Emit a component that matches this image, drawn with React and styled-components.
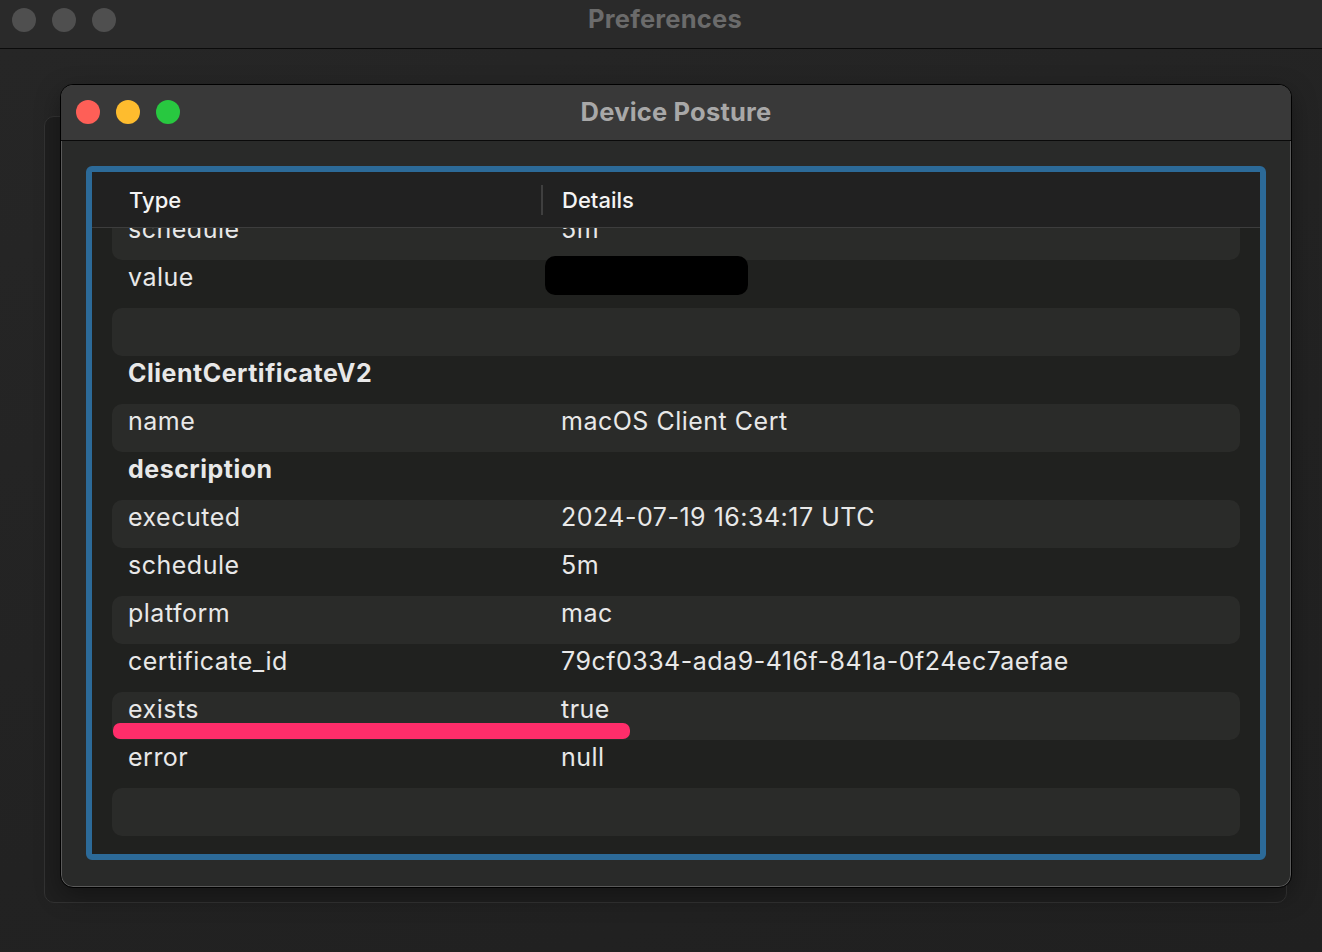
import React from "react";
import styled, { createGlobalStyle } from "styled-components";

const Global = createGlobalStyle`
  html, body { margin: 0; padding: 0; background: #242424; }
  body { font-family: Inter, "Open Sans", "Liberation Sans", sans-serif; -webkit-font-smoothing: antialiased; }
  * { box-sizing: border-box; }
`;

const Page = styled.div`
  width: 1322px;
  height: 952px;
  display: flex;
  flex-direction: column;
  overflow: hidden;
  background: #242424;
`;

const TopBar = styled.div`
  height: 49px;
  flex: none;
  position: relative;
  display: flex;
  align-items: flex-start;
  justify-content: center;
  padding: 3px 0 0 8px;
  background: #2a2a2a;
  border-bottom: 1px solid #0b0b0b;
`;

const Lights = styled.div`
  position: absolute;
  left: ${(p) => p.$left}px;
  top: ${(p) => p.$top}px;
  display: flex;
  gap: 16px;
`;

const Light = styled.span`
  width: 24px;
  height: 24px;
  border-radius: 50%;
  background: ${(p) => p.$color};
`;

const Title = styled.div`
  font-weight: 700;
  font-size: 25.5px;
  line-height: 32px;
  letter-spacing: 0.2px;
  color: ${(p) => p.$color};
`;

const Desktop = styled.div`
  position: relative;
  flex: 1;
  background: linear-gradient(160deg, #262626 0%, #222222 60%, #202020 100%);
`;

const BackSheet = styled.div`
  position: absolute;
  left: 44px;
  top: 67px;
  width: 1243px;
  height: 787px;
  border-radius: 10px;
  background: #1f1f1f;
  border: 1px solid #333333;
`;

const Window = styled.div`
  position: absolute;
  left: 60px;
  top: 35px;
  width: 1232px;
  height: 804px;
  border-radius: 13px;
  background: #292a29;
  border: 1px solid #000;
  box-shadow: inset 0 0 0 1px #5a5a5a, 0 8px 24px rgba(0, 0, 0, 0.35);
  display: flex;
  flex-direction: column;
  overflow: hidden;
`;

const WinTitleBar = styled.div`
  height: 56px;
  flex: none;
  position: relative;
  display: flex;
  align-items: center;
  justify-content: center;
  background: #393939;
  border-bottom: 1px solid #0a0a0a;
  padding-bottom: 2px;
`;

const WinBody = styled.div`
  flex: 1;
  padding: 25px 25px 27px 25px;
  display: flex;
`;

const Frame = styled.div`
  flex: 1;
  border: 6px solid #2c6a98;
  border-radius: 6px;
  background: #20211f;
  display: flex;
  flex-direction: column;
  overflow: hidden;
`;

const Header = styled.div`
  height: 56px;
  flex: none;
  display: grid;
  grid-template-columns: 449px 1fr;
  align-items: center;
  background: #212121;
  border-bottom: 1px solid #3d3d3d;
  color: #f4f4f4;
  font-size: 22px;
  font-weight: 500;
`;

const HeadCell = styled.div`
  padding-left: ${(p) => p.$pad}px;
  height: 30px;
  display: flex;
  align-items: center;
  border-left: ${(p) => (p.$divider ? "2px solid #3f3f3f" : "none")};
  padding-top: 1px;
`;

const TableBody = styled.div`
  flex: 1;
  overflow: hidden;
  padding: 0 20px;
`;

const List = styled.div`
  margin-top: -16px;
  display: flex;
  flex-direction: column;
`;

const Row = styled.div`
  position: relative;
  height: 48px;
  flex: none;
  display: grid;
  grid-template-columns: 433px 1fr;
  padding: 2px 0 0 16px;
  border-radius: 10px;
  background: ${(p) => (p.$striped ? "#2a2b29" : "transparent")};
  color: #e8e8e8;
  font-size: 25px;
  letter-spacing: 0.5px;
  line-height: 30px;
  font-weight: ${(p) => (p.$bold ? 700 : 400)};
`;

const Cell = styled.div`
  position: relative;
  white-space: nowrap;
`;

const Redacted = styled.div`
  position: absolute;
  left: -16px;
  top: -6px;
  width: 203px;
  height: 39px;
  border-radius: 10px;
  background: #000;
`;

const Highlight = styled.div`
  position: absolute;
  left: 1px;
  top: 31px;
  width: 517px;
  height: 16px;
  border-radius: 7px;
  background: #ff2d6a;
`;

const rows = [
  { k: "schedule", v: "5m" },
  { k: "value", v: "", redacted: true },
  { k: "", v: "" },
  { k: "ClientCertificateV2", v: "", bold: true },
  { k: "name", v: "macOS Client Cert" },
  { k: "description", v: "", bold: true },
  { k: "executed", v: "2024-07-19 16:34:17 UTC" },
  { k: "schedule", v: "5m" },
  { k: "platform", v: "mac" },
  { k: "certificate_id", v: "79cf0334-ada9-416f-841a-0f24ec7aefae" },
  { k: "exists", v: "true", mark: true },
  { k: "error", v: "null" },
  { k: "", v: "" },
];

export default function App() {
  return (
    <Page>
      <Global />
      <TopBar>
        <Lights $left={12} $top={8}>
          <Light $color="#4f4f4f" />
          <Light $color="#4f4f4f" />
          <Light $color="#4f4f4f" />
        </Lights>
        <Title $color="#6b6b6b">Preferences</Title>
      </TopBar>
      <Desktop>
        <BackSheet />
        <Window>
          <WinTitleBar>
            <Lights $left={15} $top={15}>
              <Light $color="#fe5f57" />
              <Light $color="#febc2e" />
              <Light $color="#28c840" />
            </Lights>
            <Title $color="#a8a8a8">Device Posture</Title>
          </WinTitleBar>
          <WinBody>
            <Frame>
              <Header>
                <HeadCell $pad={37}>Type</HeadCell>
                <HeadCell $pad={19} $divider>Details</HeadCell>
              </Header>
              <TableBody>
                <List>
                  {rows.map((r, i) => (
                    <Row key={i} $striped={i % 2 === 0} $bold={r.bold}>
                      <Cell>{r.k}</Cell>
                      <Cell>
                        {r.v}
                        {r.redacted && <Redacted />}
                      </Cell>
                      {r.mark && <Highlight />}
                    </Row>
                  ))}
                </List>
              </TableBody>
            </Frame>
          </WinBody>
        </Window>
      </Desktop>
    </Page>
  );
}
